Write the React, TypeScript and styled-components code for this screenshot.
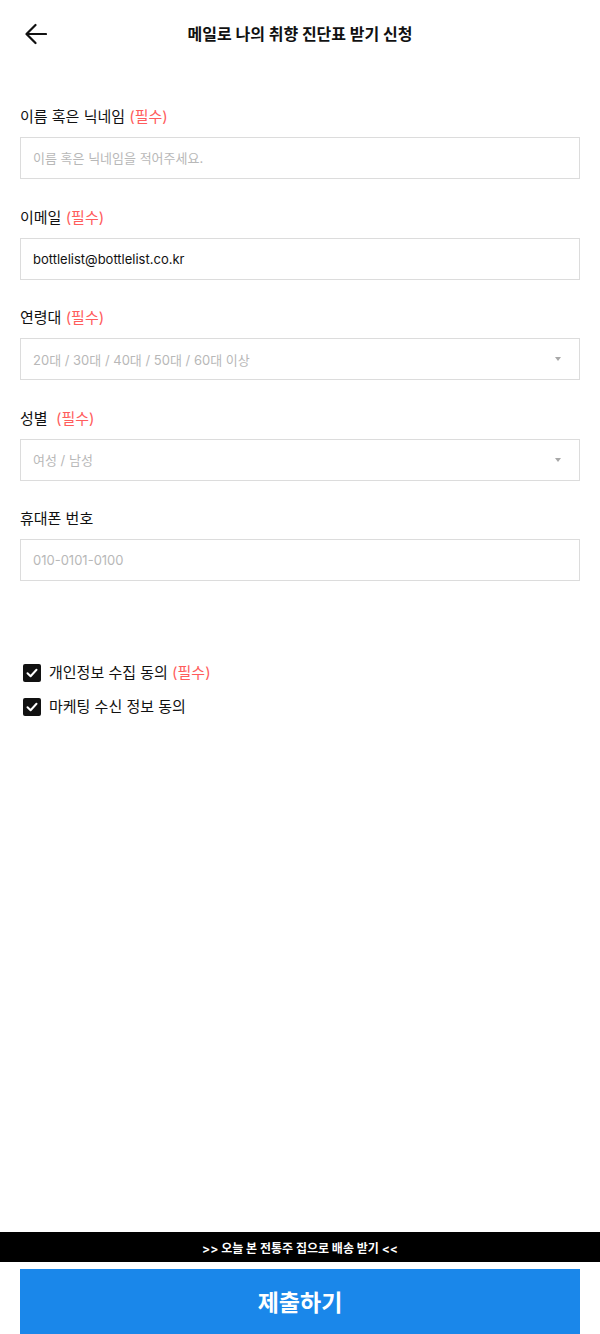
import React from "react";
import styled, { createGlobalStyle } from "styled-components";

const Global = createGlobalStyle`
  html, body { margin: 0; padding: 0; background: #fff; }
  body { font-family: Inter, "Noto Sans CJK KR", sans-serif; color: #111; }
  * { box-sizing: border-box; }
`;

const Page = styled.div`
  width: 600px;
  height: 1334px;
  display: flex;
  flex-direction: column;
  background: #fff;
`;

const Header = styled.header`
  height: 68px;
  display: flex;
  align-items: center;
  position: relative;
  padding-left: 24px;
`;

const BackButton = styled.button`
  border: none;
  background: none;
  padding: 0;
  width: 24px;
  height: 24px;
  display: flex;
  align-items: center;
  justify-content: center;
  cursor: pointer;
  margin-top: -1px;
`;

const Title = styled.h1`
  position: absolute;
  left: 0;
  right: 0;
  top: 0;
  height: 68px;
  display: flex;
  align-items: center;
  justify-content: center;
  margin: 0;
  font-size: 16px;
  font-weight: 700;
  pointer-events: none;
  padding-bottom: 2px;
`;

const Form = styled.form`
  display: flex;
  flex-direction: column;
  padding: 39px 20px 0;
  gap: 28.6px;
`;

const Field = styled.div`
  display: flex;
  flex-direction: column;
  gap: 10px;
`;

const Label = styled.label`
  font-size: 15px;
  line-height: 20px;
  color: #111;
`;

const Req = styled.span`
  color: #ff5c5c;
`;

const Box = styled.div`
  height: 42px;
  border: 1px solid #dcdcdc;
  display: flex;
  align-items: center;
  padding: 0 12px;
  justify-content: space-between;
`;

const Input = styled.input`
  border: none;
  outline: none;
  width: 100%;
  font-family: inherit;
  font-size: 13px;
  color: #111;
  padding: 0;
  background: transparent;
  &::placeholder { color: #b8b8b8; }
`;

const Placeholder = styled.span`
  font-size: 13px;
  color: #b8b8b8;
`;

const Caret = styled.span`
  width: 0;
  height: 0;
  border-left: 3.5px solid transparent;
  border-right: 3.5px solid transparent;
  border-top: 4px solid #a8a8a8;
  margin-right: 6px;
`;

const Agreements = styled.div`
  display: flex;
  flex-direction: column;
  gap: 16px;
  padding: 83px 23px 0;
`;

const CheckRow = styled.label`
  display: flex;
  align-items: center;
  gap: 8px;
  font-size: 15px;
  line-height: 18px;
  color: #111;
`;

const CheckBox = styled.span`
  width: 18px;
  height: 18px;
  border-radius: 2px;
  background: #111;
  display: flex;
  align-items: center;
  justify-content: center;
`;

const Spacer = styled.div`
  flex: 1;
`;

const Banner = styled.div`
  height: 30px;
  background: #000;
  color: #fff;
  font-size: 12px;
  font-weight: 700;
  display: flex;
  align-items: center;
  justify-content: center;
`;

const Footer = styled.div`
  padding: 7px 20px 0;
`;

const Submit = styled.button`
  width: 100%;
  height: 65px;
  border: none;
  background: #1a87ea;
  color: #fff;
  font-family: inherit;
  font-size: 23px;
  font-weight: 700;
  display: flex;
  align-items: center;
  justify-content: center;
  padding: 0 0 2px;
`;

const Check = () => (
  <svg width="14" height="14" viewBox="0 0 14 14" fill="none">
    <path d="M2.5 7.2 L5.6 10.2 L11.5 3.8" stroke="#fff" strokeWidth="2" strokeLinecap="round" strokeLinejoin="round" />
  </svg>
);

export default function App() {
  return (
    <>
      <Global />
      <Page>
        <Header>
          <BackButton aria-label="back">
            <svg width="22" height="22" viewBox="0 0 22 22" fill="none">
              <path d="M21 11 H2 M10.5 2 L1.5 11 L10.5 20" stroke="#111" strokeWidth="2.2" strokeLinecap="round" strokeLinejoin="round" />
            </svg>
          </BackButton>
          <Title>메일로 나의 취향 진단표 받기 신청</Title>
        </Header>
        <Form>
          <Field>
            <Label>이름 혹은 닉네임 <Req>(필수)</Req></Label>
            <Box><Input placeholder="이름 혹은 닉네임을 적어주세요." /></Box>
          </Field>
          <Field>
            <Label>이메일 <Req>(필수)</Req></Label>
            <Box><Input defaultValue="bottlelist@bottlelist.co.kr" /></Box>
          </Field>
          <Field>
            <Label>연령대 <Req>(필수)</Req></Label>
            <Box><Placeholder>20대 / 30대 / 40대 / 50대 / 60대 이상</Placeholder><Caret /></Box>
          </Field>
          <Field>
            <Label>성별 &nbsp;<Req>(필수)</Req></Label>
            <Box><Placeholder>여성 / 남성</Placeholder><Caret /></Box>
          </Field>
          <Field>
            <Label>휴대폰 번호</Label>
            <Box><Input placeholder="010-0101-0100" /></Box>
          </Field>
        </Form>
        <Agreements>
          <CheckRow><CheckBox><Check /></CheckBox><span>개인정보 수집 동의 <Req>(필수)</Req></span></CheckRow>
          <CheckRow><CheckBox><Check /></CheckBox><span>마케팅 수신 정보 동의</span></CheckRow>
        </Agreements>
        <Spacer />
        <Banner>&gt;&gt; 오늘 본 전통주 집으로 배송 받기 &lt;&lt;</Banner>
        <Footer><Submit>제출하기</Submit></Footer>
      </Page>
    </>
  );
}
